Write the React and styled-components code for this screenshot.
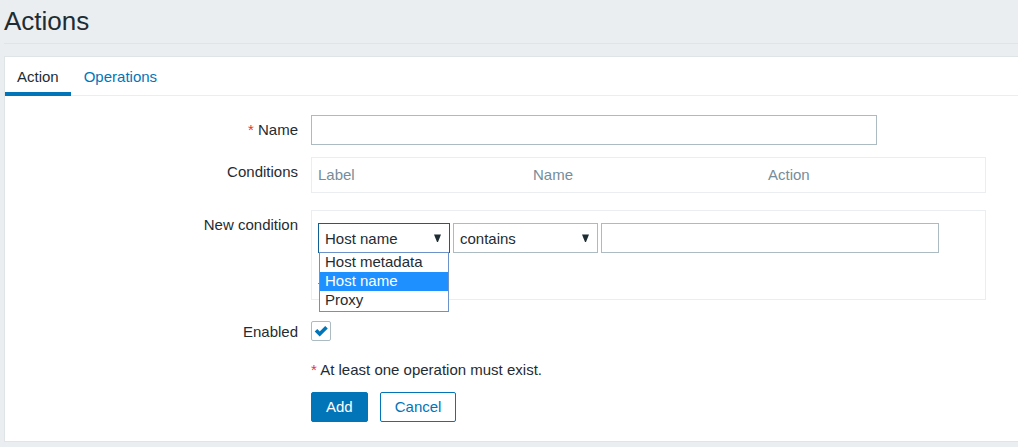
import React, { useState } from "react";
import styled, { createGlobalStyle } from "styled-components";

const GlobalStyle = createGlobalStyle`
  *, *::before, *::after { box-sizing: border-box; }
  body {
    margin: 0;
    background: #ebeef0;
    color: #1f2c33;
    font: 15px/18px "Liberation Sans", Arial, sans-serif;
  }
  input, select, button { font: inherit; color: inherit; }
`;

const Page = styled.main`
  padding: 0 0 5px 4px;
`;

const PageHeader = styled.header`
  height: 44px;
  margin-bottom: 12px;
  padding-top: 6px;
  border-bottom: 1px solid #dfe4e7;
`;

const Title = styled.h1`
  margin: 0;
  font-size: 26px;
  line-height: 30px;
  font-weight: 400;
`;

const Panel = styled.section`
  background: #fff;
  border: 1px solid #dfe4e7;
  border-right: 0;
`;

const Tabs = styled.nav`
  display: flex;
  gap: 1px;
  height: 39px;
  border-bottom: 1px solid #ebeef0;
`;

const Tab = styled.a`
  height: 39px;
  padding: 11px 12px 0;
  text-decoration: none;
  color: ${(p) => (p.$active ? "#1f2c33" : "#0275b8")};
  border-bottom: ${(p) => (p.$active ? "4px solid #0275b8" : "0")};
`;

const Form = styled.form`
  display: grid;
  grid-template-columns: 293px minmax(0, 1fr);
  column-gap: 13px;
  padding: 19px 32px 19px 0;
`;

const Label = styled.label`
  text-align: right;
  padding-top: ${(p) => (p.$compact ? 2 : 6)}px;
`;

const Required = styled.span`
  color: #e33734;
`;

const Field = styled.div`
  min-width: 0;
  margin-bottom: ${(p) => p.$gap ?? 12}px;
  grid-column: 2;
`;

const TextInput = styled.input`
  display: block;
  width: 100%;
  max-width: ${(p) => p.$max}px;
  height: 30px;
  padding: 0 5px;
  background: #fff;
  border: 1px solid #acbbc2;
  border-radius: 0;
  outline: 0;
`;

const Box = styled.div`
  max-width: 675px;
  padding: ${(p) => p.$pad};
  border: 1px solid #ebeef0;
`;

const Table = styled.table`
  width: 100%;
  table-layout: fixed;
  border-collapse: collapse;
`;

const HeadCell = styled.th`
  width: ${(p) => p.$width || "auto"};
  padding: 8px 0;
  text-align: left;
  font-weight: 400;
  color: #768d99;
`;

const ConditionRow = styled.div`
  display: flex;
  gap: 3px;
`;

const SelectWrap = styled.div`
  position: relative;
  flex: none;
  width: ${(p) => p.$width}px;
`;

const Select = styled.select`
  display: block;
  appearance: none;
  width: 100%;
  height: 30px;
  padding: 2px 20px 0 6px;
  background: #fff;
  border: 1px solid ${(p) => (p.$open ? "#0f5f94" : "#acbbc2")};
  border-radius: 0;
  outline: 0;
`;

const Arrow = styled.svg`
  position: absolute;
  right: 9px;
  top: 11px;
  pointer-events: none;
`;

const OptionList = styled.ul`
  position: absolute;
  z-index: 1;
  top: 29px;
  left: 1px;
  right: 1px;
  margin: 0;
  padding: 0 0 1px;
  list-style: none;
  background: #fff;
  border: 1px solid #6c92ca;
`;

const OptionItem = styled.li`
  padding: 0 5px 2px;
  line-height: 17px;
  background: ${(p) => (p.$selected ? "#1e90ff" : "#fff")};
  color: ${(p) => (p.$selected ? "#fff" : "#1f2c33")};
`;

const DottedRule = styled.div`
  width: 27px;
  height: 17px;
  margin-top: 14px;
  border-bottom: 1px dotted #768d99;
`;

const CheckWrap = styled.span`
  position: relative;
  display: block;
  width: 20px;
  height: 20px;
`;

const Checkbox = styled.input`
  display: block;
  appearance: none;
  width: 20px;
  height: 20px;
  margin: 0;
  background: #fff;
  border: 1px solid #acbbc2;
  border-radius: 2px;
  & + svg { display: none; }
  &:checked + svg { display: block; }
`;

const Tick = styled.svg`
  position: absolute;
  top: 0;
  left: 0;
  pointer-events: none;
`;

const Buttons = styled(Field)`
  display: flex;
  gap: 12px;
`;

const Button = styled.button`
  height: 30px;
  padding: 0 14px;
  border: 1px solid #0275b8;
  border-radius: 2px;
  background: ${(p) => (p.$primary ? "#0275b8" : "#fff")};
  color: ${(p) => (p.$primary ? "#fff" : "#0275b8")};
`;

function DropArrow() {
  return (
    <Arrow width="7" height="8" viewBox="0 0 7 8" aria-hidden="true">
      <path d="M0 0.5H7L4 8H3Z" fill="#1f2c33" />
    </Arrow>
  );
}

const types = ["Host metadata", "Host name", "Proxy"];

export default function App() {
  const [type, setType] = useState("Host name");
  return (
    <>
      <GlobalStyle />
      <Page>
        <PageHeader>
          <Title>Actions</Title>
        </PageHeader>
        <Panel>
          <Tabs>
            <Tab href="#action" $active aria-current="page">Action</Tab>
            <Tab href="#operations">Operations</Tab>
          </Tabs>
          <Form onSubmit={(e) => e.preventDefault()}>
            <Label htmlFor="name"><Required>*</Required> Name</Label>
            <Field>
              <TextInput id="name" type="text" required $max={566} />
            </Field>

            <Label as="div" id="conditions-label">Conditions</Label>
            <Field $gap={17}>
              <Box $pad="0 6px">
                <Table aria-labelledby="conditions-label">
                  <thead>
                    <tr>
                      <HeadCell scope="col" $width="215px">Label</HeadCell>
                      <HeadCell scope="col" $width="235px">Name</HeadCell>
                      <HeadCell scope="col">Action</HeadCell>
                    </tr>
                  </thead>
                </Table>
              </Box>
            </Field>

            <Label htmlFor="condition-type">New condition</Label>
            <Field $gap={21}>
              <Box $pad="12px 46px 15px 6px">
                <ConditionRow>
                  <SelectWrap $width={132}>
                    <Select
                      id="condition-type"
                      $open
                      value={type}
                      onChange={(e) => setType(e.target.value)}
                    >
                      {types.map((t) => <option key={t}>{t}</option>)}
                    </Select>
                    <DropArrow />
                    <OptionList role="listbox" aria-label="Condition type">
                      {types.map((t) => (
                        <OptionItem
                          key={t}
                          role="option"
                          aria-selected={t === type}
                          $selected={t === type}
                          onClick={() => setType(t)}
                        >
                          {t}
                        </OptionItem>
                      ))}
                    </OptionList>
                  </SelectWrap>
                  <SelectWrap $width={145}>
                    <Select aria-label="Operator" defaultValue="contains">
                      <option>contains</option>
                    </Select>
                    <DropArrow />
                  </SelectWrap>
                  <TextInput type="text" aria-label="Value" $max={338} />
                </ConditionRow>
                <DottedRule />
              </Box>
            </Field>

            <Label htmlFor="enabled" $compact>Enabled</Label>
            <Field $gap={20}>
              <CheckWrap>
                <Checkbox id="enabled" type="checkbox" defaultChecked />
                <Tick width="20" height="20" viewBox="0 0 20 20" aria-hidden="true">
                  <path d="M5 9.3L8.7 13L15.5 6.2" fill="none" stroke="#0275b8" strokeWidth="3.6" />
                </Tick>
              </CheckWrap>
            </Field>

            <Field $gap={13}>
              <Required>*</Required> At least one operation must exist.
            </Field>

            <Buttons $gap={0}>
              <Button type="submit" $primary>Add</Button>
              <Button type="button">Cancel</Button>
            </Buttons>
          </Form>
        </Panel>
      </Page>
    </>
  );
}
